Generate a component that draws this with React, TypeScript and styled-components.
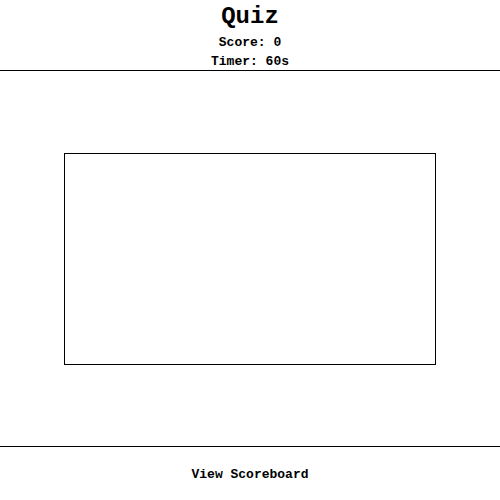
import React from "react";
import styled, { createGlobalStyle } from "styled-components";

const Global = createGlobalStyle`
  html, body { margin: 0; padding: 0; background: #fff; }
  body { font-family: "Liberation Mono", "Courier New", monospace; color: #000; }
`;

const Page = styled.div`
  height: 500px;
  display: flex;
  flex-direction: column;
`;

const Header = styled.header`
  text-align: center;
  border-bottom: 1px solid #000;
  height: 71px;
  box-sizing: border-box;
  padding-top: 2px;
`;

const Title = styled.h1`
  margin: 0 0 1px;
  font-size: 24px;
  line-height: 30px;
  font-weight: bold;
`;

const Stat = styled.div`
  font-size: 13px;
  font-weight: bold;
  line-height: 19px;
`;

const Main = styled.main`
  flex: 1;
  display: flex;
  align-items: center;
  justify-content: center;
`;

const QuestionBox = styled.div`
  width: 372px;
  height: 212px;
  box-sizing: border-box;
  border: 1px solid #000;
  margin-left: -1px;
`;

const Footer = styled.footer`
  height: 54px;
  box-sizing: border-box;
  border-top: 1px solid #000;
  display: flex;
  align-items: center;
  justify-content: center;
  padding-top: 1px;
`;

const FooterLink = styled.span`
  font-size: 13px;
  font-weight: bold;
`;

export default function App() {
  return (
    <Page>
      <Global />
      <Header>
        <Title>Quiz</Title>
        <Stat>Score: 0</Stat>
        <Stat>Timer: 60s</Stat>
      </Header>
      <Main>
        <QuestionBox />
      </Main>
      <Footer>
        <FooterLink>View Scoreboard</FooterLink>
      </Footer>
    </Page>
  );
}
